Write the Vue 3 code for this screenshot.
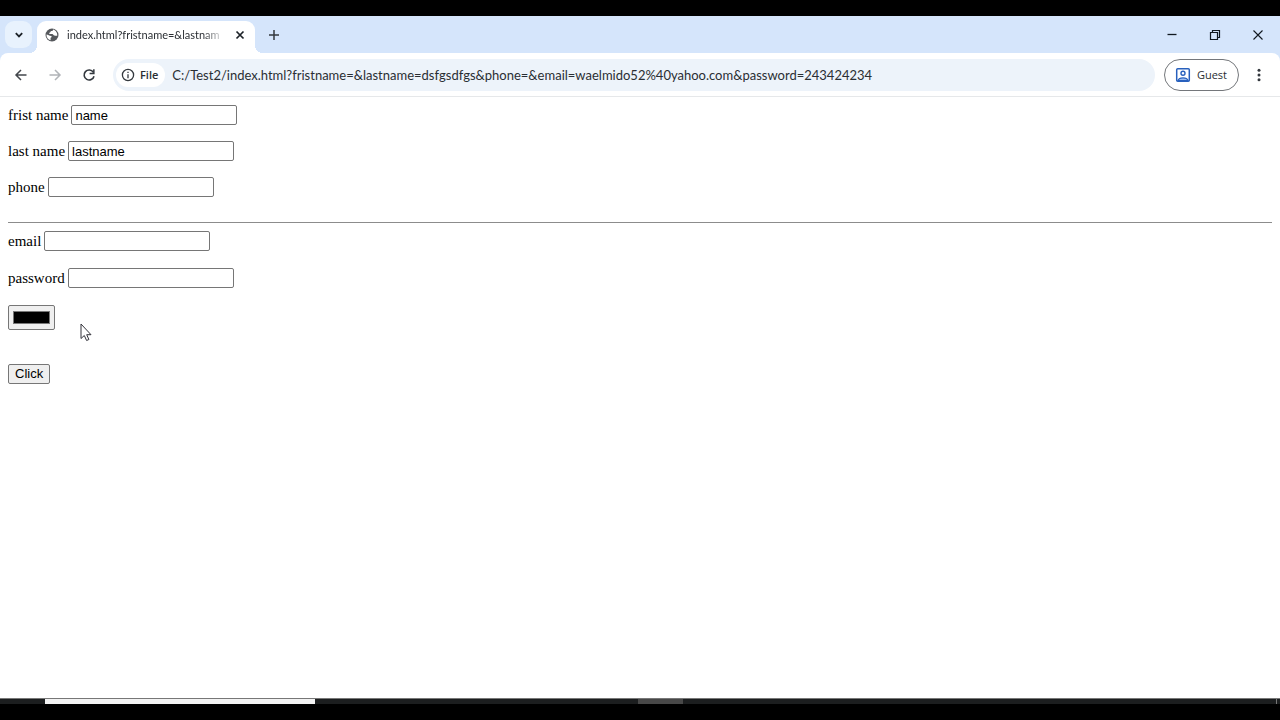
<script setup>
import { ref } from 'vue'

const address = ref('C:/Test2/index.html?fristname=&lastname=dsfgsdfgs&phone=&email=waelmido52%40yahoo.com&password=243424234')
const personal = ref([
  { id: 'fristname', label: 'frist name', type: 'text', value: 'name' },
  { id: 'lastname', label: 'last name', type: 'text', value: 'lastname' },
  { id: 'phone', label: 'phone', type: 'text', value: '' },
])
const account = ref([
  { id: 'email', label: 'email', type: 'email', value: '' },
  { id: 'password', label: 'password', type: 'password', value: '' },
])
const color = ref('#000000')
</script>

<template>
  <div class="screen">
    <header class="tabstrip">
      <button class="tab-search" aria-label="Search tabs">
        <svg width="10" height="10" viewBox="0 0 10 10"><path d="M1.8 3.2 5 6.4l3.2-3.2" fill="none" stroke="#1c2228" stroke-width="1.8" /></svg>
      </button>
      <div class="tab">
        <svg class="globe" width="14" height="14" viewBox="0 0 14 14">
          <circle cx="7" cy="7" r="6.5" fill="#55585c" />
          <path d="M8.2 1.4c-.2 1.2-.8 1.5-1.9 1.6-.9.1-.7 1.2-1.4 1.6-.7.3-.9.8-.4 1.3h2.8c1 0 1 1.4 2 1.5.8.1 1.4.6 2.9.3.4-2.7-1.4-5.6-4-6.3Z" fill="#fff" />
          <path d="M1.5 6.6c1.4.2 2.9 1.2 4.6 1.4.9.2.7 1.2-.1 1.5-.7.3-.3 1.2-.4 2.8C3 11.7 1.3 9.3 1.5 6.6Z" fill="#fff" />
        </svg>
        <span class="tab-title">index.html?fristname=&amp;lastnam</span>
        <button class="plain" aria-label="Close tab">
          <svg width="10" height="10" viewBox="0 0 10 10"><path d="m1.5 1.5 7 7m0-7-7 7" stroke="#1c2228" stroke-width="1.7" /></svg>
        </button>
      </div>
      <button class="plain new-tab" aria-label="New tab">
        <svg width="12" height="12" viewBox="0 0 12 12"><path d="M6 1v10M1 6h10" stroke="#33383e" stroke-width="1.5" /></svg>
      </button>
      <div class="window-controls">
        <button class="plain" aria-label="Minimize"><svg width="12" height="12" viewBox="0 0 12 12"><path d="M1.5 5.5h9" stroke="#111820" stroke-width="1.3" /></svg></button>
        <button class="plain" aria-label="Restore"><svg width="12" height="12" viewBox="0 0 12 12"><path d="M1.5 3.5h7v7h-7zM3.5 3.5v-2h7v7h-2" fill="none" stroke="#111820" stroke-width="1.2" /></svg></button>
        <button class="plain" aria-label="Close"><svg width="12" height="12" viewBox="0 0 12 12"><path d="m1.5 1.5 9 9m0-9-9 9" stroke="#111820" stroke-width="1.1" /></svg></button>
      </div>
    </header>

    <div class="toolbar-wrap">
      <nav class="toolbar">
        <button class="plain" aria-label="Back"><svg width="14" height="14" viewBox="0 0 14 14"><path d="M12.5 7h-10M7 2 2 7l5 5" fill="none" stroke="#43474c" stroke-width="1.5" /></svg></button>
        <button class="plain" aria-label="Forward"><svg width="14" height="14" viewBox="0 0 14 14"><path d="M1.5 7h10M7 2l5 5-5 5" fill="none" stroke="#b1b4b8" stroke-width="1.5" /></svg></button>
        <button class="plain" aria-label="Reload"><svg width="14" height="14" viewBox="0 0 14 14"><path d="M11.3 4.2A5 5 0 1 0 12 8.2" fill="none" stroke="#33383e" stroke-width="1.6" /><path d="M12.6 1.2v5h-5V4.8h3.5V1.2z" fill="#33383e" /></svg></button>
        <div class="omnibox">
          <button class="file-chip">
            <svg width="14" height="14" viewBox="0 0 14 14"><circle cx="7" cy="7" r="5.6" fill="none" stroke="#33383e" stroke-width="1.3" /><path d="M7 6.3v4M7 3.7v1.4" stroke="#33383e" stroke-width="1.3" /></svg>
            File
          </button>
          <input v-model="address" class="address" type="text" aria-label="Address" spellcheck="false" />
        </div>
        <button class="guest">
          <svg width="16" height="16" viewBox="0 0 16 16"><rect x="1.7" y="1.7" width="12.6" height="12.6" rx="1" fill="none" stroke="#2860bd" stroke-width="1.5" /><circle cx="8" cy="6.2" r="2" fill="none" stroke="#2860bd" stroke-width="1.4" /><path d="M3 13.5c1.2-3.5 8.8-3.5 10 0Z" fill="#9bbdf2" stroke="#2860bd" stroke-width="1.2" /></svg>
          Guest
        </button>
        <button class="plain" aria-label="Menu"><svg width="14" height="14" viewBox="0 0 14 14" fill="#33383e"><circle cx="7" cy="2.2" r="1.5" /><circle cx="7" cy="7" r="1.5" /><circle cx="7" cy="11.8" r="1.5" /></svg></button>
      </nav>
    </div>

    <main class="page">
      <form @submit.prevent>
        <div class="group personal">
          <div v-for="f in personal" :key="f.id" class="field">
            <label :for="f.id">{{ f.label }}</label>
            <input :id="f.id" v-model="f.value" :type="f.type" />
          </div>
        </div>
        <hr />
        <div class="group">
          <div v-for="f in account" :key="f.id" class="field">
            <label :for="f.id">{{ f.label }}</label>
            <input :id="f.id" v-model="f.value" :type="f.type" />
          </div>
          <input v-model="color" class="color" type="color" aria-label="Color" />
        </div>
        <button class="submit" type="submit">Click</button>
      </form>
      <svg class="pointer" width="12" height="20" viewBox="0 0 12 20"><path d="M1 1v14.500l3.300-3 2.300 5 2.300-1-2.200-4.800H11Z" fill="#fff" stroke="#33333b" stroke-width="1" /></svg>
    </main>

    <footer class="taskbar">
      <span class="start"></span><span class="search"></span><span class="space"></span><span class="active"></span><span class="rest"></span>
    </footer>
  </div>
</template>

<style>
body { margin: 0; background: #000; }
</style>

<style scoped>
.screen {
  box-sizing: border-box;
  display: flex;
  flex-direction: column;
  min-height: 100vh;
  padding: 16px 0;
  background: #000;
  font-family: "Open Sans", "Noto Sans", sans-serif;
  color: #2a2e33;
}
button { font-family: inherit; color: inherit; }
svg { display: block; flex: none; }
.plain { padding: 0; border: 0; background: none; }
.tabstrip {
  display: flex;
  align-items: center;
  height: 37px;
  background: #d5e5fb;
}
.tab-search {
  display: flex;
  align-items: center;
  justify-content: center;
  width: 27px;
  height: 27px;
  margin: 0 5px;
  padding: 0;
  border: 0;
  border-radius: 9px;
  background: #e8f2fd;
}
.tab {
  position: relative;
  box-sizing: border-box;
  display: flex;
  align-items: center;
  align-self: flex-end;
  width: 218px;
  height: 32px;
  padding: 0 10px 4px 8px;
  border-radius: 9px 9px 0 0;
  background: #fff;
}
.tab::before, .tab::after {
  content: "";
  position: absolute;
  bottom: 0;
  width: 8px;
  height: 8px;
}
.tab::before { right: 100%; background: radial-gradient(circle at 0 0, transparent 8px, #fff 8px); }
.tab::after { left: 100%; background: radial-gradient(circle at 100% 0, transparent 8px, #fff 8px); }
.tab-title {
  flex: 1;
  min-width: 0;
  margin: 0 10px 0 8px;
  overflow: hidden;
  white-space: nowrap;
  font-family: Lato, "Open Sans", sans-serif;
  font-size: 11px;
  line-height: 18px;
  mask-image: linear-gradient(to right, #000 86%, transparent);
}
.new-tab { margin-left: 13px; }
.window-controls {
  display: flex;
  gap: 31px;
  margin-left: auto;
  padding-right: 16px;
}
.toolbar-wrap { background: #d5e5fb; }
.toolbar {
  display: flex;
  align-items: center;
  gap: 20px;
  height: 43px;
  padding: 0 14px;
  border-bottom: 1px solid #e6e8ea;
  border-radius: 8px 8px 0 0;
  background: #fff;
}
.omnibox {
  flex: 1;
  display: flex;
  align-items: center;
  height: 32px;
  margin: 0 -11px 0 -3px;
  padding-left: 3px;
  border-radius: 16px;
  background: #edf3fa;
}
.file-chip {
  display: flex;
  align-items: center;
  gap: 5px;
  height: 24px;
  padding: 0 7px 0 5px;
  border: 0;
  border-radius: 12px;
  background: #fff;
  font-size: 11px;
  font-weight: 600;
}
.address {
  flex: 1;
  min-width: 0;
  margin: 0 12px 0 7px;
  padding: 0;
  border: 0;
  outline: 0;
  background: none;
  font-family: Lato, "Open Sans", sans-serif;
  font-size: 13px;
  line-height: 20px;
  color: #2a2e33;
}
.guest {
  display: flex;
  align-items: center;
  gap: 6px;
  height: 32px;
  margin-right: -7px;
  padding: 0 11px 0 10px;
  border: 1px solid #74777b;
  border-radius: 16px;
  background: #fff;
  font-size: 11px;
}
.page {
  position: relative;
  flex: 1;
  padding: 8px;
  background: #fff;
  font-family: "Liberation Serif", serif;
  font-size: 15px;
  line-height: 20px;
  color: #000;
}
.group {
  display: flex;
  flex-direction: column;
  align-items: flex-start;
  gap: 17px;
}
.personal { gap: 16px; }
.field { display: flex; gap: 3px; }
.field input {
  box-sizing: border-box;
  width: 166px;
  height: 20px;
  padding: 0 3px;
  border: 1px solid #767676;
  border-radius: 2px;
  background: #fff;
  font-family: "Liberation Sans", sans-serif;
  font-size: 13px;
  color: #000;
}
hr {
  height: 0;
  margin: 25px 0 8px;
  border: 0;
  border-top: 1px solid #8c8c8c;
}
.color {
  box-sizing: border-box;
  width: 47px;
  height: 25px;
  padding: 1px 2px;
  border: 1px solid #767676;
  border-radius: 2px;
  background: #efefef;
}
.submit {
  display: block;
  box-sizing: border-box;
  height: 20px;
  margin-top: 34px;
  padding: 0 6px;
  border: 1px solid #767676;
  border-radius: 2px;
  background: #efefef;
  font-family: "Liberation Sans", sans-serif;
  font-size: 13px;
  line-height: 18px;
  color: #000;
}
.pointer {
  position: absolute;
  top: 226px;
  left: 80px;
}
.taskbar {
  display: flex;
  height: 5px;
  border-top: 1px solid #777;
  background: #1c1e1f;
}
.start { width: 45px; }
.search { width: 270px; background: #f3f3f3; }
.space { width: 323px; }
.active { width: 45px; background: #484848; }
.rest { flex: 1; margin-right: 3px; border-right: 1px solid #777; }
</style>
